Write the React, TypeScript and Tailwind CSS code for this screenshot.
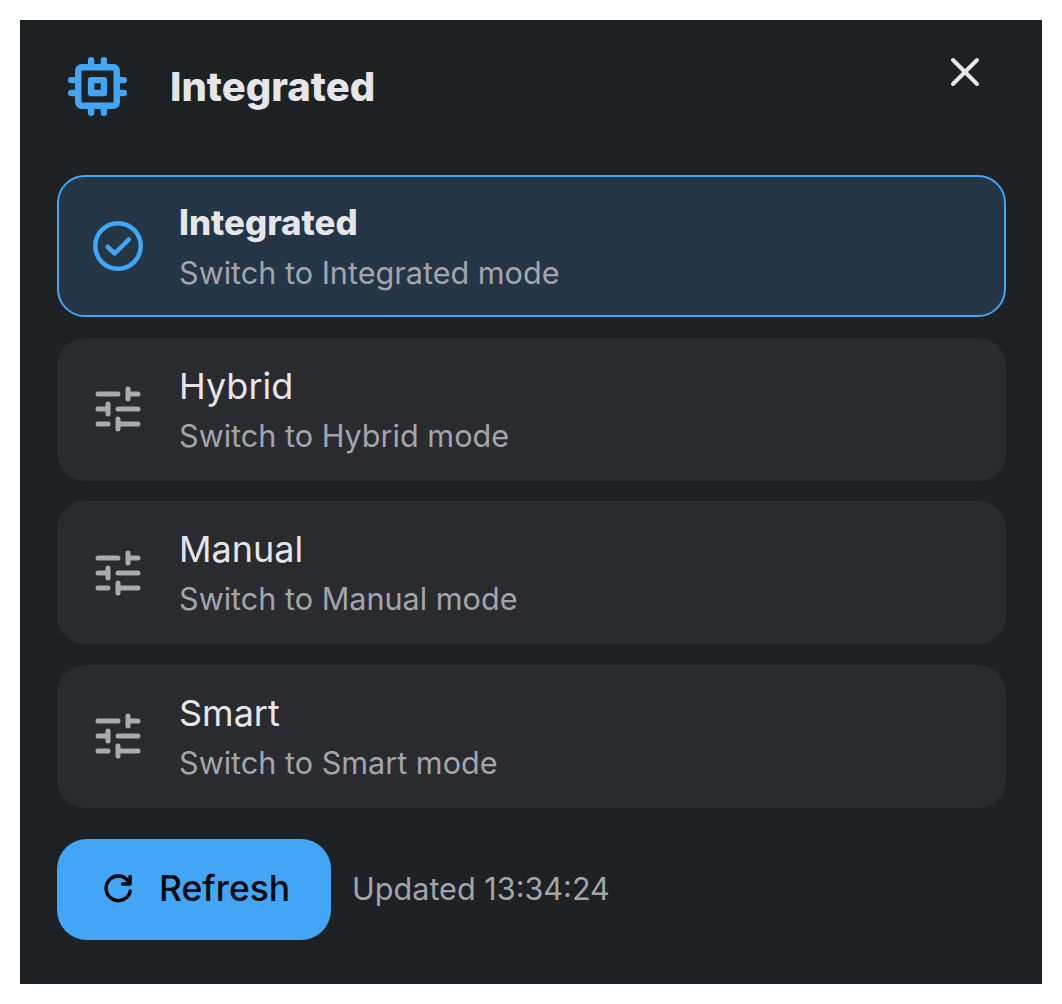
import React from 'react';

const modes = [
  { name: 'Integrated', active: true },
  { name: 'Hybrid', active: false },
  { name: 'Manual', active: false },
  { name: 'Smart', active: false },
];

function ChipIcon() {
  return (
    <svg viewBox="0 0 24 24" className="w-[77px] h-[77px] text-[#42a5f5]" fill="none" stroke="currentColor" strokeWidth="2" strokeLinecap="round" strokeLinejoin="round">
      <rect x="6" y="6" width="12" height="12" rx="1" />
      <rect x="10" y="10" width="4" height="4" />
      <path d="M10 3.8V5M14 3.8V5M10 19v1.2M14 19v1.2M3.8 10H5M3.8 14H5M19 10h1.2M19 14h1.2" />
    </svg>
  );
}

function TuneIcon() {
  return (
    <svg viewBox="0 0 24 24" className="w-[60px] h-[60px] text-[#a9abaf]" fill="none" stroke="currentColor" strokeWidth="2" strokeLinecap="round">
      <path d="M4 6h8M16 4v4M16 6h4M4 12h4M8 10v4M12 12h8M4 18h4M12 16v4M12 18h8" />
    </svg>
  );
}

function CheckIcon() {
  return (
    <svg viewBox="0 0 24 24" className="w-[60px] h-[60px] text-[#42a5f5]" fill="none" stroke="currentColor" strokeWidth="1.8" strokeLinecap="round" strokeLinejoin="round">
      <circle cx="12" cy="12" r="9.1" />
      <path d="M7.9 12.4l2.8 2.6 5.6-5.6" />
    </svg>
  );
}

function CloseIcon() {
  return (
    <svg viewBox="0 0 24 24" className="w-12 h-12 text-[#e6e6ea]" fill="none" stroke="currentColor" strokeWidth="2" strokeLinecap="round">
      <path d="M6 6l12 12M18 6L6 18" />
    </svg>
  );
}

function RefreshIcon() {
  return (
    <svg viewBox="0 0 24 24" className="w-[42px] h-[42px] text-[#05080c]" fill="none" stroke="currentColor" strokeWidth="2" strokeLinecap="round" strokeLinejoin="round">
      <path d="M17.6 7.2A7 7 0 1 0 19 13.2" />
      <path d="M18.9 4.9v4.3h-4.3" />
    </svg>
  );
}

export default function App() {
  return (
    <div className="bg-white p-5 min-h-[1004px] font-['Inter',sans-serif]">
      <div className="bg-[#1e2124] h-[964px] pl-[37px] pr-[36px]">
        {/* Header */}
        <div className="flex items-start justify-between h-[155px]">
          <div className="flex items-center gap-[34px] pt-[28px] pl-[2px]">
            <ChipIcon />
            <span className="text-[40px] font-extrabold text-[#e6e6ea]">Integrated</span>
          </div>
          <div className="pt-[28px] pr-[17px]">
            <CloseIcon />
          </div>
        </div>

        {/* Modes */}
        <div className="flex flex-col gap-[20.5px]">
          {modes.map((mode) => (
            <div
              key={mode.name}
              className={`flex items-center rounded-[28px] pl-[29px] ${
                mode.active ? 'h-[142px] bg-[#243546] border-[2.5px] border-[#42a5f5]' : 'h-[143px] bg-[#292b2f] border-2 border-[#292b2f]'
              }`}
            >
              {mode.active ? <CheckIcon /> : <TuneIcon />}
              <div className="ml-[31px] flex flex-col">
                <span className={`leading-[46px] text-[#e6e6ea] ${mode.active ? 'text-[34.8px] font-extrabold -mt-px' : 'text-[36px] font-normal'}`}>{mode.name}</span>
                <span className={`text-[30.6px] leading-[40px] text-[#a3a5aa] ${mode.active ? 'mt-[8px]' : 'mt-[7px]'}`}>Switch to {mode.name} mode</span>
              </div>
            </div>
          ))}
        </div>

        {/* Footer */}
        <div className="flex items-center mt-[31px]">
          <button className="flex items-center h-[101px] w-[274px] rounded-[30px] bg-[#42a5f5] pl-[40px] gap-[20px]">
            <RefreshIcon />
            <span className="text-[35.5px] font-medium text-[#05080c]">Refresh</span>
          </button>
          <span className="ml-[21px] text-[30.6px] text-[#a3a5aa]">Updated 13:34:24</span>
        </div>
      </div>
    </div>
  );
}
